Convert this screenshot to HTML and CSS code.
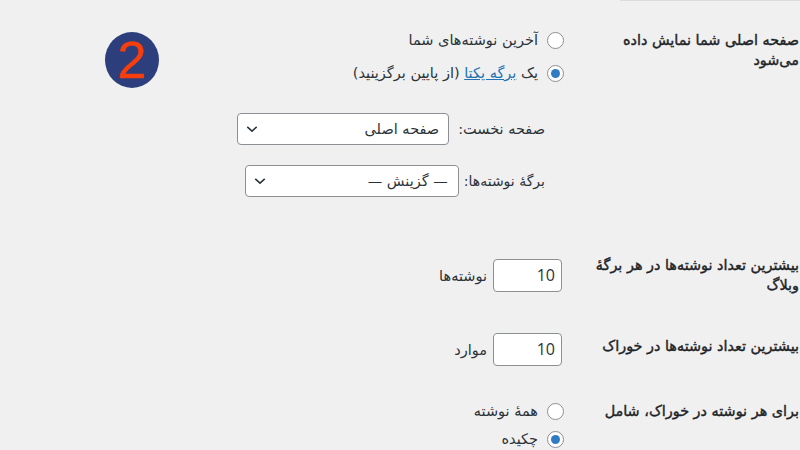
FILE: index.html
```html
<!DOCTYPE html>
<html lang="fa" dir="rtl">
<head>
  <meta charset="UTF-8" />
  <title>تنظیمات خواندن</title>
  <link rel="stylesheet" href="styles.css">
</head>
<body>
  <div class="top-line"></div>
  <div class="badge">2</div>

  <div class="row row-front">
    <div class="row-label">صفحه اصلی شما نمایش داده می‌شود</div>
    <div class="row-field">
      <label class="radio-line"><span class="radio"></span>آخرین نوشته‌های شما</label>
      <label class="radio-line"><span class="radio checked"></span>یک&nbsp;<a href="#">برگه یکتا</a>&nbsp;(از پایین برگزینید)</label>
      <div class="page-select first">
        <span class="select-label">صفحه نخست:</span>
        <div class="select select-wide">صفحه اصلی<svg class="chevron" viewBox="0 0 14 8"><path d="M1.5 1.5 7 6.5l5.5-5" /></svg></div>
      </div>
      <div class="page-select second">
        <span class="select-label">برگهٔ نوشته‌ها:</span>
        <div class="select">— گزینش —<svg class="chevron" viewBox="0 0 14 8"><path d="M1.5 1.5 7 6.5l5.5-5" /></svg></div>
      </div>
    </div>
  </div>

  <div class="row row-posts">
    <div class="row-label">بیشترین تعداد نوشته‌ها در هر برگهٔ وبلاگ</div>
    <div class="row-field number-line">
      <div class="number">10</div>
      <span>نوشته‌ها</span>
    </div>
  </div>

  <div class="row row-feed">
    <div class="row-label">بیشترین تعداد نوشته‌ها در خوراک</div>
    <div class="row-field number-line">
      <div class="number">10</div>
      <span>موارد</span>
    </div>
  </div>

  <div class="row row-summary">
    <div class="row-label">برای هر نوشته در خوراک، شامل</div>
    <div class="row-field">
      <label class="radio-line"><span class="radio"></span>همهٔ نوشته</label>
      <label class="radio-line"><span class="radio checked"></span>چکیده</label>
    </div>
  </div>
</body>
</html>
```

FILE: styles.css
```css
html, body {
  height: 100%;
}

body {
  margin: 0;
  width: 800px;
  height: 450px;
  overflow: hidden;
  background-color: #f0f0f1;
  color: #2c3338;
  font-family: "DejaVu Sans", "Noto Sans", sans-serif;
  font-size: 14.5px;
  line-height: 20px;
}

.top-line {
  height: 1px;
  width: 180px;
  background-color: #dcdcde;
}

.badge {
  position: absolute;
  left: 105px;
  top: 32px;
  width: 54px;
  height: 56px;
  border-radius: 50%;
  background-color: #2c3e7c;
  color: #f73e0e;
  font-family: "Liberation Sans", sans-serif;
  font-size: 52px;
  line-height: 56px;
  text-align: center;
  -webkit-text-stroke: 0.5px #f73e0e;
}

.row {
  display: grid;
  grid-template-columns: 210px 1fr;
  column-gap: 26px;
}

.row-label {
  padding-right: 1px;
  font-size: 14.4px;
  color: #1d2327;
  -webkit-text-stroke: 0.4px #1d2327;
}

.row-front { padding-top: 29px; height: 229px; }
.row-posts { height: 74px; }
.row-feed { height: 65px; }

.row-posts .row-label { margin-top: -4px; }
.row-feed .row-label { padding-top: 3px; }
.row-summary { padding-top: 3px; }

.radio-line {
  display: flex;
  align-items: center;
  height: 20px;
  margin-bottom: 13px;
}

.row-summary .radio-line {
  margin-bottom: 8px;
}

.radio {
  flex: none;
  box-sizing: border-box;
  width: 17px;
  height: 17px;
  margin-left: 9px;
  border: 1px solid #8c8f94;
  border-radius: 50%;
  background-color: #fff;
  display: flex;
  align-items: center;
  justify-content: center;
}

.radio.checked::before {
  content: "";
  width: 9px;
  height: 9px;
  border-radius: 50%;
  background-color: #2f7bc4;
}

a {
  color: #2271b1;
}

.page-select {
  display: flex;
  align-items: center;
  margin-top: 20px;
  padding-right: 19px;
}

.page-select.first {
  margin-top: 30px;
}

.first .select-label {
  margin-left: 9px;
}

.second .select-label {
  margin-left: 5px;
  font-size: 14px;
}

.select {
  box-sizing: border-box;
  display: flex;
  align-items: center;
  justify-content: space-between;
  width: 214px;
  height: 32px;
  padding: 0 10px 0 8px;
  background-color: #fff;
  border: 1px solid #8c8f94;
  border-radius: 4px;
}

.select-wide {
  width: 212px;
  padding-right: 9px;
}

.chevron {
  width: 12px;
  height: 8px;
  fill: none;
  stroke: #2c3338;
  stroke-width: 1.8;
}

.number-line {
  display: flex;
  align-items: center;
  align-self: start;
  margin-right: 2px;
}

.number {
  box-sizing: border-box;
  width: 69px;
  height: 33px;
  margin-left: 6px;
  padding: 0 6px;
  line-height: 31px;
  font-family: "Open Sans", sans-serif;
  font-size: 16px;
  background-color: #fff;
  border: 1px solid #8c8f94;
  border-radius: 4px;
}
```
